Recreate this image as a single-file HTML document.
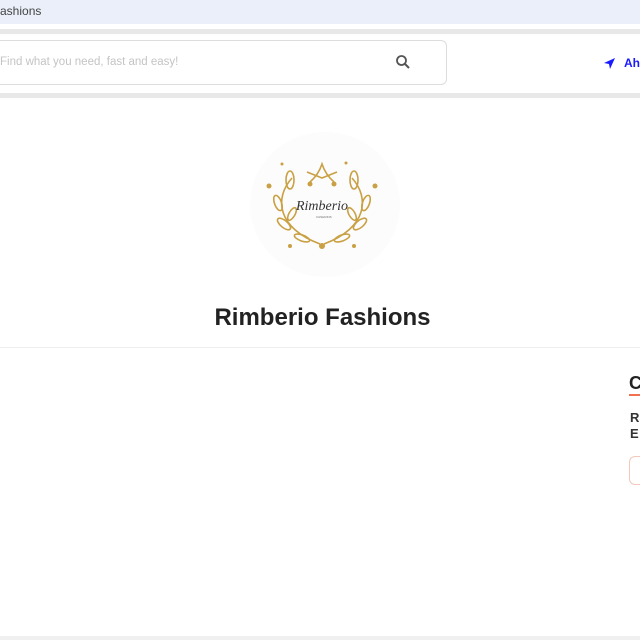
<html><head><style>
body{margin:0;width:640px;height:640px;overflow:hidden;background:#fff;font-family:"Liberation Sans",sans-serif;position:relative}
.a{position:absolute}
</style></head><body>
<div class="a" style="left:0;top:0;width:640px;height:24px;background:#eaeff9"></div>
<div class="a" style="left:0;top:4px;font-size:12px;color:#444">ashions</div>
<div class="a" style="left:0;top:29px;width:640px;height:5px;background:#e8e8e8"></div>
<div class="a" style="left:-10px;top:40px;width:455px;height:43px;border:1px solid #ddd;border-radius:6px;background:#fff"></div>
<div class="a" style="left:0;top:56px;font-size:11.5px;color:#c4c4c4">Find what you need, fast and easy!</div>
<svg class="a" style="left:395px;top:54px" width="16" height="16" viewBox="0 0 16 16"><circle cx="6.5" cy="6.5" r="4.5" fill="none" stroke="#555" stroke-width="1.8"/><line x1="10" y1="10" x2="14" y2="14" stroke="#555" stroke-width="2"/></svg>
<svg class="a" style="left:603px;top:57px" width="13" height="13" viewBox="0 0 13 13"><path d="M12 1L1 6l5 1 1 5z" fill="#1a1aff"/></svg>
<div class="a" style="left:624px;top:56px;font-size:12px;color:#1a1aff;font-weight:bold">Ah</div>
<div class="a" style="left:0;top:93px;width:640px;height:5px;background:#e8e8e8"></div>
<div class="a" style="left:250px;top:132px;width:150px;height:145px;border-radius:50%;background:#fcfcfc"></div>
<svg class="a" style="left:262px;top:158px" width="120" height="95" viewBox="0 0 120 95">
<g fill="none" stroke="#c9a043" stroke-width="1.6">
<path d="M30 20 C12 40 15 70 58 86"/><path d="M90 20 C108 40 105 70 62 86"/>
<path d="M48 24 C55 18 58 12 60 6 C62 12 65 18 72 24"/><path d="M45 14 L60 20 L75 14"/>
<ellipse cx="28" cy="22" rx="4" ry="9"/><ellipse cx="92" cy="22" rx="4" ry="9"/>
<ellipse cx="16" cy="45" rx="3.5" ry="8" transform="rotate(-20 16 45)"/><ellipse cx="104" cy="45" rx="3.5" ry="8" transform="rotate(20 104 45)"/>
<ellipse cx="22" cy="66" rx="3.5" ry="8" transform="rotate(-50 22 66)"/><ellipse cx="98" cy="66" rx="3.5" ry="8" transform="rotate(50 98 66)"/>
<ellipse cx="40" cy="80" rx="3" ry="8" transform="rotate(-70 40 80)"/><ellipse cx="80" cy="80" rx="3" ry="8" transform="rotate(70 80 80)"/>
<ellipse cx="30" cy="56" rx="3" ry="7" transform="rotate(30 30 56)"/><ellipse cx="90" cy="56" rx="3" ry="7" transform="rotate(-30 90 56)"/>
</g>
<g fill="#c9a043"><circle cx="7" cy="28" r="2.5"/><circle cx="113" cy="28" r="2.5"/><circle cx="28" cy="88" r="2"/><circle cx="92" cy="88" r="2"/><circle cx="60" cy="88" r="3"/><circle cx="48" cy="26" r="2.5"/><circle cx="72" cy="26" r="2.5"/><circle cx="20" cy="6" r="1.5"/><circle cx="84" cy="5" r="1.5"/></g>
<text x="60" y="52" font-family="Liberation Serif,serif" font-style="italic" font-size="14" text-anchor="middle" fill="#333">Rimberio</text>
<text x="62" y="60" font-size="3" text-anchor="middle" fill="#666">FASHIONS</text>
</svg>
<div class="a" style="left:0;top:304px;width:645px;text-align:center;font-size:24px;font-weight:bold;color:#222">Rimberio Fashions</div>
<div class="a" style="left:0;top:347px;width:640px;height:1px;background:#eee"></div>
<div class="a" style="left:629px;top:373px;font-size:18px;font-weight:bold;color:#222">C</div>
<div class="a" style="left:629px;top:394px;width:11px;height:2px;background:#f07050"></div>
<div class="a" style="left:630px;top:410px;font-size:13px;font-weight:bold;color:#333;line-height:16px">R<br>E</div>
<div class="a" style="left:629px;top:456px;width:20px;height:27px;border:1px solid #f4c8bc;border-radius:6px"></div>
<div class="a" style="left:0;top:636px;width:640px;height:4px;background:#f0f0f0"></div>
</body></html>
